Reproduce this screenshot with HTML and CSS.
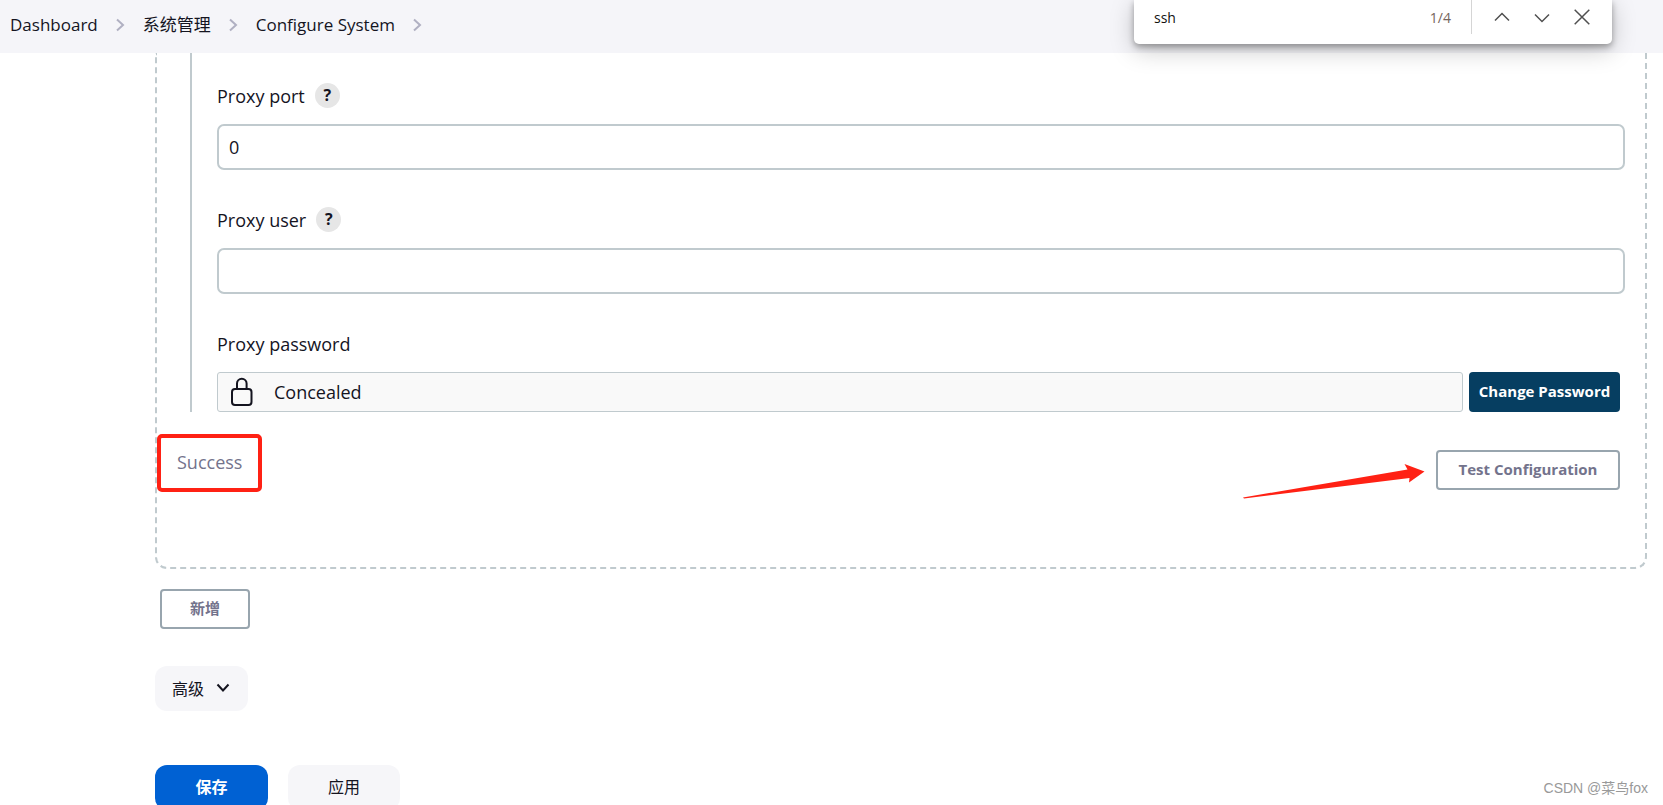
FILE: index.html
```html
<!DOCTYPE html>
<html lang="zh-CN">
<head>
<meta charset="utf-8">
<title>Configure System</title>
<link rel="stylesheet" href="styles.css">
</head>
<body>
<header class="topbar">
  <nav class="crumbs" aria-label="Breadcrumb">
    <a href="#">Dashboard</a>
    <svg class="crumb-sep" viewBox="0 0 9 14"><path d="M1 1.500 7 7l-6 5.500"/></svg>
    <a href="#">系统管理</a>
    <svg class="crumb-sep" viewBox="0 0 9 14"><path d="M1 1.500 7 7l-6 5.500"/></svg>
    <a href="#">Configure System</a>
    <svg class="crumb-sep" viewBox="0 0 9 14"><path d="M1 1.500 7 7l-6 5.500"/></svg>
  </nav>
</header>
<div class="findbar" role="search">
  <input class="find-input" type="text" value="ssh" aria-label="Find">
  <span class="find-count">1/4</span>
  <div class="find-actions">
    <button type="button" aria-label="Previous"><svg viewBox="0 0 18 18"><path d="M2 12.500 9 5.500l7 7"/></svg></button>
    <button type="button" aria-label="Next"><svg viewBox="0 0 18 18"><path d="M2 6.500 9 13.500l7-7"/></svg></button>
    <button type="button" aria-label="Close"><svg viewBox="0 0 18 18"><path d="M1.700 1.700l14.600 14.600M16.300 1.700 1.700 16.300"/></svg></button>
  </div>
</div>
<main class="page">
  <form>
    <div class="group">
      <div class="section">
        <div class="field">
          <div class="label-row"><label for="port">Proxy port</label><button type="button" class="help" aria-label="Help for Proxy port">?</button></div>
          <input class="text-input" id="port" type="text" value="0">
        </div>
        <div class="field">
          <div class="label-row"><label for="user">Proxy user</label><button type="button" class="help" aria-label="Help for Proxy user">?</button></div>
          <input class="text-input" id="user" type="text">
        </div>
        <div class="field">
          <div class="label-row"><span>Proxy password</span></div>
          <div class="secret-row">
            <div class="secret">
              <svg class="lock" viewBox="0 0 24 30"><rect x="2" y="12" width="19.500" height="16" rx="3"/><path d="M7 12V6.500a4.800 4.800 0 0 1 9.600 0V12"/></svg>
              <span>Concealed</span>
            </div>
            <button type="button" class="btn btn-dark">Change Password</button>
          </div>
        </div>
      </div>
      <div class="test-row">
        <span class="status">Success</span>
        <div class="test-action">
          <svg class="arrow" viewBox="0 0 182 36"><path d="M0 33.500 164.500 5.500 161.500 0 181.500 7.500 166 18.500 166.500 14 1 34.500Z"/></svg>
          <button type="button" class="btn btn-outline btn-test">Test Configuration</button>
        </div>
      </div>
    </div>
    <button type="button" class="btn btn-outline btn-add">新增</button>
    <button type="button" class="btn-soft btn-advanced">高级
      <svg viewBox="0 0 14 10"><path d="M1.500 1.500 7 7.500l5.500-6"/></svg>
    </button>
    <div class="submit-row">
      <button type="submit" class="btn-soft btn-save">保存</button>
      <button type="button" class="btn-soft btn-apply">应用</button>
    </div>
  </form>
</main>
<div class="watermark">CSDN @菜鸟fox</div>
</body>
</html>
```
FILE: styles.css
```css
* { box-sizing: border-box; }

html, body { height: 100%; }

body {
  margin: 0;
  overflow: hidden;
  position: relative;
  background: #fff;
  color: #14141f;
  font-family: "Open Sans", "Noto Sans CJK SC", sans-serif;
  font-size: 18px;
}

button, input { font: inherit; color: inherit; margin: 0; }

svg { fill: none; stroke: currentColor; flex: none; }

.topbar {
  height: 53px;
  padding: 0 10px;
  background: #f5f5f9;
  display: flex;
  align-items: center;
}

.crumbs {
  display: flex;
  align-items: center;
  gap: 18px;
  font-size: 17px;
  line-height: 24px;
  padding-bottom: 3px;
}

.crumbs a { color: inherit; text-decoration: none; }

.crumb-sep { width: 9px; height: 14px; stroke: #b0b0c2; stroke-width: 2; }

.findbar {
  position: absolute;
  top: 0;
  right: 51px;
  width: 478px;
  height: 44px;
  padding: 0 18px 10px 20px;
  background: #fff;
  border-radius: 0 0 5px 5px;
  box-shadow: 0 3px 6px rgba(0, 0, 0, .32), 0 6px 24px rgba(0, 0, 0, .22);
  display: flex;
  align-items: center;
  font-size: 14px;
}

.find-input { flex: 1; min-width: 0; border: 0; padding: 0; outline: 0; background: none; color: #111; }

.find-count { color: #76655c; padding-right: 20px; }

.find-actions {
  display: flex;
  align-items: center;
  gap: 16px;
  height: 34px;
  padding-left: 18px;
  border-left: 1px solid #d5d5d5;
}

.find-actions button { display: flex; border: 0; background: none; padding: 3px; color: #505050; }

.find-actions svg { width: 18px; height: 18px; stroke-width: 1.5; }

.page { padding: 0 16px 24px 155px; }

.group {
  border: 2px dashed #c0cace;
  border-top: 0;
  border-radius: 0 0 12px 12px;
  padding: 0 20px 67px 0;
}

.section {
  margin-left: 33px;
  border-left: 2px solid #c0cace;
  padding: 30px 0 0 25px;
  display: flex;
  flex-direction: column;
  gap: 37px;
}

.field { display: flex; flex-direction: column; gap: 16px; }

.label-row { display: flex; align-items: center; gap: 10px; height: 25px; }

.help {
  width: 25px;
  height: 25px;
  border: 0;
  border-radius: 50%;
  padding: 0;
  background: #e6e6e6;
  font-size: 16px;
  font-weight: 700;
  line-height: 25px;
}

.text-input {
  width: 100%;
  height: 46px;
  padding: 0 10px;
  border: 2px solid #c0cace;
  border-radius: 7px;
  background: #fff;
}

.secret-row { display: flex; gap: 6px; padding-right: 5px; }

.secret {
  flex: 1;
  height: 40px;
  padding: 0 12px;
  display: flex;
  align-items: center;
  gap: 20px;
  border: 1px solid #c0cace;
  border-radius: 3px;
  background: #f9f9f9;
}

.lock { width: 24px; height: 30px; stroke-width: 2; }

.btn {
  height: 40px;
  border-radius: 4px;
  padding: 0 8px 2px;
  font-size: 15px;
  font-weight: 700;
  white-space: nowrap;
}

.btn-dark { width: 151px; border: 0; background: #063e61; color: #fff; }

.btn-outline { border: 2px solid #98a5ae; background: #fff; color: #73738c; }

.test-row {
  display: flex;
  justify-content: space-between;
  align-items: flex-start;
  padding: 22px 5px 0 0;
}

.status {
  height: 58px;
  padding: 0 16px;
  border: 4px solid #ff2114;
  border-radius: 5px;
  line-height: 48px;
  color: #73738c;
}

.test-action { display: flex; align-items: flex-start; gap: 11px; padding-top: 16px; }

.arrow { width: 182px; height: 36px; margin-top: 14px; fill: #ff2114; stroke: none; }

.btn-test { width: 184px; }

.btn-add { display: block; width: 90px; margin: 20px 0 0 5px; padding-bottom: 4px; }

.btn-soft {
  height: 45px;
  border: 0;
  border-radius: 12px;
  padding: 0 0 3px;
  background: #f6f6f9;
  font-size: 16px;
}

.btn-advanced {
  display: flex;
  align-items: center;
  gap: 12px;
  margin-top: 37px;
  padding: 0 18px 2px 17px;
}

.btn-advanced svg { width: 14px; height: 10px; stroke-width: 2; }

.submit-row { display: flex; gap: 20px; margin-top: 54px; }

.btn-save { width: 113px; background: #0061d3; color: #fff; font-weight: 700; }

.btn-apply { width: 112px; }

.watermark {
  position: absolute;
  right: 15px;
  bottom: 7px;
  font-family: "Liberation Sans", "Noto Sans CJK SC", sans-serif;
  font-size: 14px;
  line-height: 20px;
  color: #999;
}
```
